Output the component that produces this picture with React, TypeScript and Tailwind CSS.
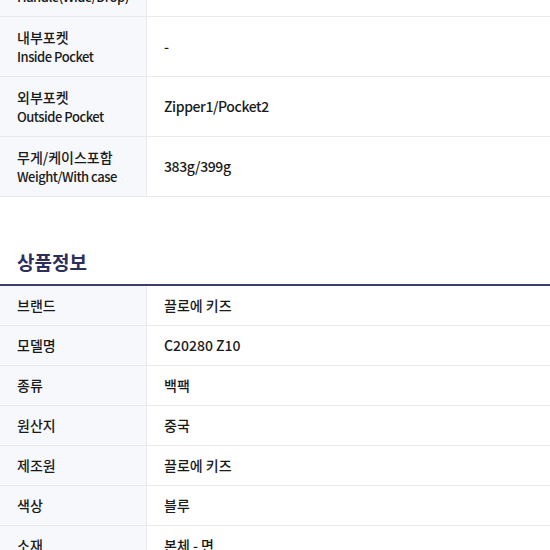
const specs = [
  { ko: '손잡이(와이드/드롭)', en: 'Handle(Wide/Drop)', value: '' },
  { ko: '내부포켓', en: 'Inside Pocket', value: '-' },
  { ko: '외부포켓', en: 'Outside Pocket', value: 'Zipper1/Pocket2' },
  { ko: '무게/케이스포함', en: 'Weight/With case', value: '383g/399g' },
];

const info = [
  { label: '브랜드', value: '끌로에 키즈' },
  { label: '모델명', value: 'C20280 Z10' },
  { label: '종류', value: '백팩' },
  { label: '원산지', value: '중국' },
  { label: '제조원', value: '끌로에 키즈' },
  { label: '색상', value: '블루' },
  { label: '소재', value: '본체 - 면' },
];

export default function App() {
  return (
    <div
      className="h-[550px] w-[550px] overflow-hidden bg-white text-[#1a1a1a]"
      style={{ fontFamily: '"Noto Sans CJK KR", "Noto Sans", sans-serif' }}
    >
      <div className="-mt-[43px]">
        {specs.map((row) => (
          <div key={row.en} className="flex h-[60px] border-b border-[#e9e9ee]">
            <div className="flex w-[147px] shrink-0 flex-col justify-center border-r border-[#e9e9ee] bg-[#f7f8fc] pl-[17px]">
              <span className="text-[14px] font-medium leading-[20px]">{row.ko}</span>
              <span className="text-[13px] font-medium leading-[19px] tracking-[-0.5px]">{row.en}</span>
            </div>
            <div className="flex items-center pl-[17px] text-[14px] font-medium tracking-[-0.4px]">
              {row.value}
            </div>
          </div>
        ))}
      </div>

      <h2 className="mt-[52px] pb-[9px] pl-[17px] text-[19px] font-bold leading-[26px] text-[#2c2f5c]">
        상품정보
      </h2>
      <div className="border-t-2 border-[#3c3f6b]">
        {info.map((row) => (
          <div key={row.label} className="flex h-[40px] border-b border-[#e9e9ee]">
            <div className="flex w-[147px] shrink-0 items-center border-r border-[#e9e9ee] bg-[#f7f8fc] pl-[17px] text-[14px] font-medium">
              {row.label}
            </div>
            <div className="flex items-center pl-[17px] text-[14px] font-medium">{row.value}</div>
          </div>
        ))}
      </div>
    </div>
  );
}
